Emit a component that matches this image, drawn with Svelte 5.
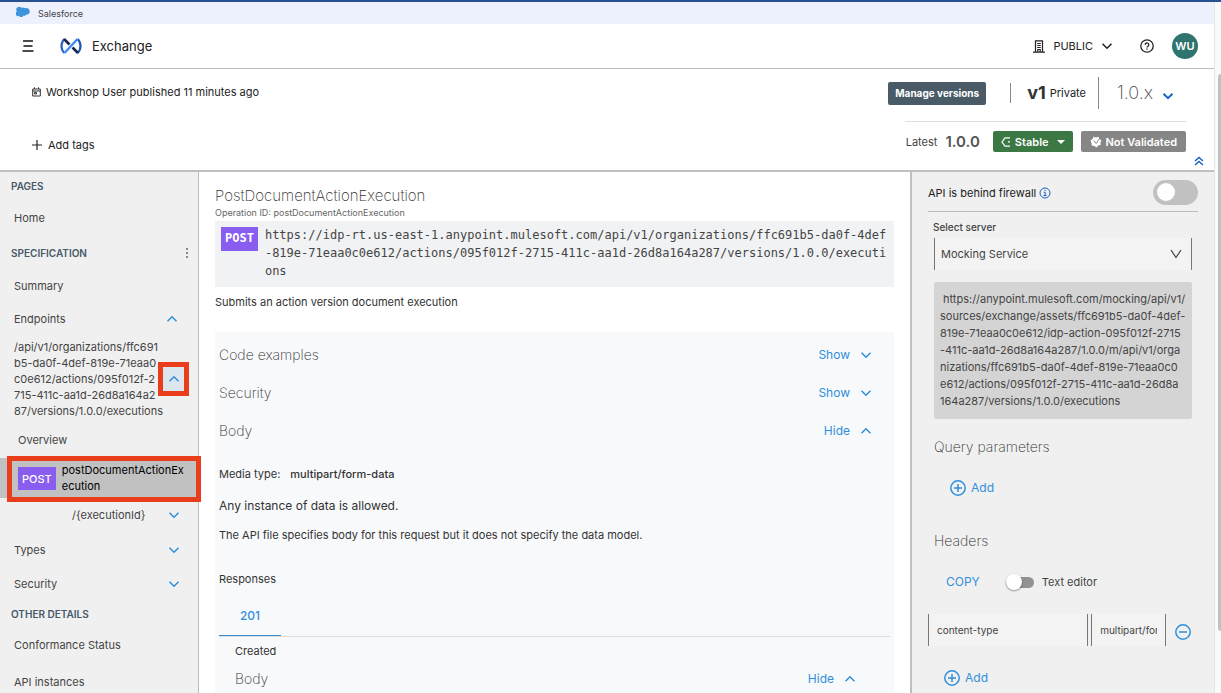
<script lang="ts">
	let firewall = false;
	let textEditor = false;
	let server = 'Mocking Service';
	let headerName = 'content-type';
	let headerValue = 'multipart/form-data';

	const path = [
		'/api/v1/organizations/ffc691',
		'b5-da0f-4def-819e-71eaa0',
		'c0e612/actions/095f012f-2',
		'715-411c-aa1d-26d8a164a2',
		'87/versions/1.0.0/executions'
	];
	const url =
		'https://idp-rt.us-east-1.anypoint.mulesoft.com/api/v1/organizations/ffc691b5-da0f-4def-819e-71eaa0c0e612/actions/095f012f-2715-411c-aa1d-26d8a164a287/versions/1.0.0/executions';
	const mockUrl = [
		'https://anypoint.mulesoft.com/mocking/api/v1/',
		'sources/exchange/assets/ffc691b5-da0f-4def-',
		'819e-71eaa0c0e612/idp-action-095f012f-2715',
		'-411c-aa1d-26d8a164a287/1.0.0/m/api/v1/orga',
		'nizations/ffc691b5-da0f-4def-819e-71eaa0c0',
		'e612/actions/095f012f-2715-411c-aa1d-26d8a',
		'164a287/versions/1.0.0/executions'
	];

	const sections = [
		{ name: 'Code examples', open: false },
		{ name: 'Security', open: false },
		{ name: 'Body', open: true }
	];
</script>

{#snippet chevron(up: boolean)}
	<svg class="chevron" class:up viewBox="0 0 12 12" width="12" height="12">
		<path d="M1.5 3.8 6 8.2l4.5-4.4" />
	</svg>
{/snippet}

{#snippet circle(plus: boolean)}
	<svg class="circle" viewBox="0 0 16 16" width="16" height="16">
		<circle cx="8" cy="8" r="7.2" />
		<path d={plus ? 'M4 8h8M8 4v8' : 'M4 8h8'} />
	</svg>
{/snippet}

<div class="app">
	<div class="page">
		<div class="brand-bar">
			<svg viewBox="0 0 14 10" width="14" height="10">
				<path
					d="M5.8 1.1A2.5 2.5 0 0 1 9.2 1.3 3 3 0 0 1 13.600 4 2.9 2.9 0 0 1 10.3 7.5 2.2 2.2 0 0 1 7.5 8.6 2.5 2.5 0 0 1 3 8.800 2.3 2.3 0 0 1 .9 4.500 2.7 2.7 0 0 1 5.8 1.100Z"
					fill="#3d94dc"
				/>
			</svg>
			<span>Salesforce</span>
		</div>

		<header class="topbar">
			<button class="menu" aria-label="Menu">
				<svg viewBox="0 0 12 12" width="12" height="12">
					<path d="M1 1h10M1.5 6h9M.5 11h11" stroke="#111" stroke-width="1.3" fill="none" />
				</svg>
			</button>
			<svg class="logo" viewBox="0 0 22 18" width="22" height="18" fill="none" stroke-width="2.2">
				<path d="M4.5 2Q1.500 4.500 1.500 9t3 7" stroke="#2b63c9" />
				<path d="M17.500 2q3 2.500 3 7t-3 7" stroke="#2256b4" />
				<path d="m4 2 5.500 5.500M12.500 10.500 18 16" stroke="#14284f" stroke-width="2.6" />
				<path d="M4.500 16 17.500 2" stroke="#3f8bf5" stroke-width="2.4" />
			</svg>
			<span class="product">Exchange</span>
			<button class="org">
				<svg viewBox="0 0 12 13" width="12" height="13" fill="none" stroke="#222" stroke-width="1.2">
					<path d="M2.500 12V.8h7V12M0 12.200h12M4.800 12V9.500h2.400V12M4.200 3.500h3.600M4.200 5.500h3.600M4.200 7.500h3.600" />
				</svg>
				<span>PUBLIC</span>
				{@render chevron(false)}
			</button>
			<button class="help" aria-label="Help">
				<svg viewBox="0 0 14 14" width="14" height="14" fill="none" stroke="#222" stroke-width="1.3">
					<circle cx="7" cy="7" r="6.2" />
					<path d="M5.2 5.7a1.8 1.8 0 1 1 2.7 1.6Q7 7.7 7 8.500M7 9.500v1.200" />
				</svg>
			</button>
			<button class="avatar">WU</button>
		</header>

		<section class="asset">
			<div class="asset-left">
				<div class="published">
					<svg viewBox="0 0 9 10" width="9" height="10" fill="none" stroke="#333">
						<path d="M.7 2h7.600v7H.7zM.7 4h7.600M2.500.3V2M6.500.3V2M2.500 5.500h2v1.500h-2z" />
					</svg>
					<span>Workshop User published 11 minutes ago</span>
				</div>
				<button class="add-tags">
					<svg viewBox="0 0 10 10" width="10" height="10" stroke="#222" stroke-width="1.2">
						<path d="M5 0v10M0 5h10" />
					</svg>
					Add tags
				</button>
			</div>
			<div class="asset-right">
				<div class="versions">
					<button class="manage">Manage versions</button>
					<span class="bar"></span>
					<strong class="major">v1</strong>
					<span>Private</span>
					<span class="bar tall"></span>
					<button class="minor">1.0.x {@render chevron(false)}</button>
				</div>
				<div class="latest">
					<span>Latest</span>
					<strong>1.0.0</strong>
					<button class="tag stable">
						<svg viewBox="0 0 10 10" width="10" height="10" fill="none" stroke="#fff" stroke-width="1.2">
							<path d="M9 .9H4L1 5l3 4.100h5M7 4.900h2" />
						</svg>
						Stable
						<svg viewBox="0 0 8 4" width="8" height="4"><path d="M0 0h8L4 4z" fill="#fff" /></svg>
					</button>
					<button class="tag invalid">
						<svg viewBox="0 0 12 12" width="12" height="12">
							<path d="m3.500.8 2.500.7 2.500-.7.8 2.200 2 1.200-.8 2.300.3 2.300-2.400.8L6.500 11.500 4.300 9.900 1.600 9.400 1.500 6.900.4 4.500l2.200-1.400z" fill="#fff" />
							<path d="m3.700 4.500 2.500 3 3-4.500" fill="none" stroke="#868686" />
						</svg>
						Not Validated
					</button>
				</div>
			</div>
			<button class="collapse" aria-label="Collapse header">
				<svg viewBox="0 0 10 10" width="10" height="10" fill="none" stroke="#1b63c6" stroke-width="1.5">
					<path d="m1 5 4-3.500L9 5M1 9l4-3.500L9 9" />
				</svg>
			</button>
		</section>

		<div class="workspace">
			<nav class="sidebar">
				<h2>Pages</h2>
				<a class="mid" href="#home">Home</a>
				<h2 class="spec">
					Specification
					<button class="more" aria-label="More">
						<svg viewBox="0 0 2 10" width="2" height="10" fill="#666">
							<circle cx="1" cy="1" r="1" />
							<circle cx="1" cy="5" r="1" />
							<circle cx="1" cy="9" r="1" />
						</svg>
					</button>
				</h2>
				<a class="short" href="#summary">Summary</a>
				<a href="#endpoints">Endpoints {@render chevron(true)}</a>
				<div class="path">
					<a href="#path">
						{#each path as line}
							<span>{line}</span>
						{/each}
					</a>
					<button class="toggle-path" aria-label="Collapse endpoint">{@render chevron(true)}</button>
				</div>
				<a class="mid overview" href="#overview">Overview</a>
				<a class="selected" href="#post">
					<span class="verb">POST</span>
					<span class="op">postDocumentActionExecution</span>
				</a>
				<a class="nested" href="#execution">/&#123;executionId&#125; {@render chevron(false)}</a>
				<a class="mid low" href="#types">Types {@render chevron(false)}</a>
				<a class="short low" href="#security">Security {@render chevron(false)}</a>
				<h2>Other details</h2>
				<a href="#conformance">Conformance Status</a>
				<a class="tall" href="#instances">API instances</a>
			</nav>

			<main>
				<h1>PostDocumentActionExecution</h1>
				<div class="operation">Operation ID: postDocumentActionExecution</div>
				<div class="url">
					<span class="method">POST</span>
					<code>{url}</code>
				</div>
				<p class="summary">Submits an action version document execution</p>

				<div class="docs">
					{#each sections as section}
						<div class="section">
							<h3>{section.name}</h3>
							<button class="link">
								{section.open ? 'Hide' : 'Show'}
								{@render chevron(section.open)}
							</button>
						</div>
					{/each}
					<div class="media">
						<span>Media type:</span>
						<b>multipart/form-data</b>
					</div>
					<p class="any">Any instance of data is allowed.</p>
					<p class="note">The API file specifies body for this request but it does not specify the data model.</p>
					<h4>Responses</h4>
					<div class="tabs"><button>201</button></div>
					<div class="response">
						<p>Created</p>
						<div class="response-body">
							<h3>Body</h3>
							<button class="link">Hide {@render chevron(true)}</button>
						</div>
					</div>
				</div>
			</main>

			<aside>
				<div class="firewall">
					<label for="firewall">API is behind firewall</label>
					<svg viewBox="0 0 12 12" width="12" height="12" fill="none" stroke="#1b63c6">
						<circle cx="6" cy="6" r="5" />
						<path d="M4.800 5.300h1.400v3M4.500 8.500h3M5.500 3.300h1.200" />
					</svg>
					<input id="firewall" class="switch" type="checkbox" bind:checked={firewall} />
				</div>
				<label class="server-label" for="server">Select server</label>
				<div class="server">
					<select id="server" bind:value={server}>
						<option>Mocking Service</option>
					</select>
					<svg viewBox="0 0 12 10" width="12" height="10" fill="none" stroke="#444" stroke-width="1.2">
						<path d="m1 1 5 7.500L11 1" />
					</svg>
				</div>
				<div class="mock">
					{#each mockUrl as line}
						<div>{line}</div>
					{/each}
				</div>
				<h3 class="params">Query parameters</h3>
				<button class="add query">{@render circle(true)} Add</button>
				<h3 class="headers">Headers</h3>
				<div class="tools">
					<button class="copy">COPY</button>
					<input id="editor" class="slim" type="checkbox" bind:checked={textEditor} />
					<label for="editor">Text editor</label>
				</div>
				<div class="pair">
					<input class="name" aria-label="Header name" bind:value={headerName} />
					<input class="value" aria-label="Header value" bind:value={headerValue} />
					<button aria-label="Remove header">{@render circle(false)}</button>
				</div>
				<button class="add header">{@render circle(true)} Add</button>
			</aside>
		</div>
	</div>
	<div class="scrollbar"><div class="thumb"></div></div>
</div>

<style>
	:global(body) {
		margin: 0;
	}
	.app,
	.app * {
		box-sizing: border-box;
	}
	.app {
		display: flex;
		height: 100vh;
		overflow: hidden;
		border-top: 2px solid #29508f;
		background: #fff;
		color: #222;
		font: 11px/16px Inter, 'Liberation Sans', sans-serif;
	}
	.page {
		flex: 1;
		min-width: 0;
		display: flex;
		flex-direction: column;
	}
	h1,
	h2,
	h3,
	h4,
	p {
		margin: 0;
		font-weight: 400;
	}
	a {
		color: inherit;
		text-decoration: none;
	}
	button {
		display: flex;
		align-items: center;
		padding: 0;
		border: 0;
		background: none;
		color: inherit;
		font: inherit;
		cursor: pointer;
	}
	svg {
		flex: none;
	}
	.chevron,
	.circle {
		fill: none;
		stroke: #2f8fdb;
		stroke-width: 1.5;
	}
	.chevron.up {
		transform: rotate(180deg);
	}

	.brand-bar {
		height: 22px;
		display: flex;
		align-items: center;
		gap: 8px;
		padding: 0 16px;
		background: #edf0fd;
		font-size: 9px;
		color: #444;
	}
	.brand-bar svg {
		margin-bottom: 2px;
	}
	.brand-bar span {
		padding-top: 2px;
	}
	.topbar {
		height: 45px;
		display: flex;
		align-items: center;
		padding: 0 16px 0 22px;
		border-bottom: 1px solid #bbb;
	}
	.logo {
		margin: 0 10px 0 26px;
	}
	.product {
		font-size: 13px;
	}
	.org {
		margin-left: auto;
		gap: 8px;
	}
	.org .chevron {
		stroke: #222;
	}
	.help {
		margin: 0 18px 0 27px;
	}
	.avatar {
		width: 26px;
		height: 26px;
		justify-content: center;
		border-radius: 50%;
		background: #2f746f;
		color: #fff;
		font-weight: 600;
	}

	.asset {
		position: relative;
		height: 103px;
		display: flex;
		justify-content: space-between;
		padding: 8px 28px 0 32px;
		border-bottom: 2px solid #bfbfbf;
	}
	.published {
		display: flex;
		align-items: center;
		gap: 5px;
		padding-top: 7px;
	}
	.add-tags {
		gap: 6px;
		margin-top: 37px;
	}
	.versions {
		height: 32px;
		display: flex;
		align-items: center;
		color: #222;
	}
	.manage {
		height: 23px;
		padding: 0 7px;
		border-radius: 2px;
		background: #4a5b68;
		color: #fff;
		font-size: 10px;
		font-weight: 700;
	}
	.bar {
		width: 1px;
		height: 20px;
		margin: 0 16px 0 24px;
		background: #888;
	}
	.bar.tall {
		height: 32px;
		margin: 0 18px 0 12px;
	}
	.major {
		margin-right: 4px;
		font-size: 18px;
		color: #333;
	}
	.minor {
		gap: 9px;
		padding-right: 12px;
		font-size: 18px;
		font-weight: 200;
		color: #444;
	}
	.minor .chevron {
		margin-top: 5px;
		stroke: #1b63c6;
		stroke-width: 2;
	}
	.latest {
		display: flex;
		align-items: center;
		justify-content: flex-end;
		margin: 12px 0 0 17px;
		padding-top: 9px;
		border-top: 1px solid #ddd;
		color: #444;
	}
	.latest strong {
		margin: 0 13px 0 8px;
		font-size: 15px;
		font-weight: 600;
		color: #555;
	}
	.tag {
		height: 21px;
		gap: 4px;
		padding: 0 8px;
		border-radius: 2px;
		color: #fff;
		font-weight: 600;
	}
	.stable {
		margin-right: 8px;
		background: #3c7844;
	}
	.stable svg:last-child {
		margin-left: 4px;
	}
	.invalid {
		padding: 0 9px;
		background: #868686;
	}
	.collapse {
		position: absolute;
		right: 10px;
		bottom: 4px;
	}

	.workspace {
		flex: 1;
		min-height: 0;
		display: flex;
		overflow: hidden;
	}
	.sidebar {
		flex: none;
		width: 199px;
		border-right: 1px solid #bbb;
		background: #f0f0f0;
		color: #444;
	}
	.sidebar h2 {
		display: flex;
		align-items: center;
		height: 28px;
		padding-left: 11px;
		font-size: 10px;
		font-weight: 600;
		text-transform: uppercase;
		color: #45596a;
	}
	.sidebar .spec {
		justify-content: space-between;
		height: 34px;
		padding-right: 10px;
	}
	.sidebar > a {
		display: flex;
		align-items: center;
		justify-content: space-between;
		height: 34px;
		padding: 0 20px 0 14px;
	}
	.sidebar > .short {
		height: 32px;
	}
	.sidebar > .mid {
		height: 36px;
	}
	.sidebar > .tall {
		height: 40px;
	}
	.sidebar > .low {
		padding-right: 18px;
	}
	.sidebar > .overview {
		padding-left: 18px;
	}
	.sidebar > .nested {
		padding: 0 18px 0 72px;
	}
	.path {
		position: relative;
		padding: 3px 0 3px 14px;
	}
	.path span {
		display: block;
	}
	.toggle-path {
		position: absolute;
		top: 26px;
		left: 158px;
		width: 31px;
		height: 34px;
		justify-content: center;
		border: 5px solid #e93d1c;
		background: #dde6ee;
	}
	.sidebar > .selected {
		position: relative;
		height: 40px;
		justify-content: flex-start;
		gap: 6px;
		padding: 0 14px 0 18px;
		background: #c1c1c1;
		color: #000;
	}
	.selected::after {
		content: '';
		position: absolute;
		inset: -2px -3px -4px 7px;
		border: 5px solid #e93d1c;
	}
	.verb {
		padding: 4px 4px 3px;
		background: #885df0;
		color: #fff;
		font-weight: 500;
	}
	.op {
		word-break: break-all;
	}

	main {
		flex: 1;
		min-width: 0;
		padding: 16px 16px 0;
		color: #333;
	}
	h1 {
		font-size: 15px;
		font-weight: 200;
		color: #333;
	}
	.operation {
		line-height: 17px;
		font-size: 9px;
		color: #666;
	}
	.url {
		display: flex;
		align-items: flex-start;
		gap: 7px;
		padding: 5px 6px 7px;
		background: #f1f2f4;
		color: #444;
	}
	.url code,
	.method {
		font: 12px/18px 'DejaVu Sans Mono', monospace;
	}
	.url code {
		word-break: break-all;
	}
	.url .method {
		margin-top: 1px;
		padding: 2px 4px 4px;
		background: #885df0;
		color: #fff;
		font-weight: 700;
	}
	.summary {
		padding: 7px 0 22px;
	}
	.docs {
		height: 100%;
		padding: 4px 4px 0;
		background: #f8f9fb;
	}
	.section {
		display: flex;
		align-items: center;
		justify-content: space-between;
		height: 38px;
		padding-right: 18px;
	}
	h3 {
		font-size: 14px;
		font-weight: 200;
		color: #333;
	}
	.link {
		gap: 10px;
		font-size: 12px;
		color: #2f8fdb;
	}
	.media {
		display: flex;
		gap: 10px;
		padding: 16px 0;
	}
	.media b {
		font-weight: 500;
	}
	.any {
		font-size: 12px;
	}
	.note {
		padding: 13px 0 28px;
	}
	.tabs {
		display: flex;
		margin-top: 10px;
		border-bottom: 1px solid #ddd;
	}
	.tabs button {
		width: 62px;
		height: 39px;
		justify-content: center;
		border-bottom: 1px solid #2f8fdb;
		font-size: 12px;
		font-weight: 500;
		color: #2f8fdb;
	}
	.response {
		padding: 6px 34px 0 16px;
	}
	.response-body {
		display: flex;
		justify-content: space-between;
		padding-top: 12px;
	}

	aside {
		flex: none;
		width: 304px;
		padding: 0 16px;
		border-left: 2px solid #bfbfbf;
		background: #f0f0f0;
		color: #444;
	}
	.firewall {
		display: flex;
		align-items: center;
		gap: 3px;
		height: 40px;
		padding-top: 2px;
		border-bottom: 1px solid #bbb;
		color: #222;
	}
	.switch {
		appearance: none;
		width: 45px;
		height: 25px;
		margin: 0 0 0 auto;
		padding: 3px 4px;
		border-radius: 13px;
		background: #c1c1c1;
	}
	.switch::before {
		content: '';
		display: block;
		width: 18px;
		height: 18px;
		border-radius: 50%;
		background: #fff;
	}
	.switch:checked::before {
		margin-left: auto;
	}
	.server-label {
		display: block;
		padding: 7px 5px 3px;
		font-size: 10px;
		font-weight: 500;
	}
	.server {
		position: relative;
		margin: 0 6px 12px;
	}
	.server select {
		appearance: none;
		display: block;
		width: 100%;
		height: 32px;
		padding: 0 6px;
		border: solid #777;
		border-width: 0 1px;
		border-radius: 0;
		background: #f3f3f3;
		color: #444;
		font: inherit;
	}
	.server svg {
		position: absolute;
		top: 11px;
		right: 10px;
		pointer-events: none;
	}
	.mock {
		margin: 0 6px;
		padding: 9px 6px;
		border-radius: 2px;
		background: #d4d4d4;
		line-height: 17px;
		white-space: nowrap;
	}
	.mock div:first-child {
		padding-left: 3px;
	}
	.params,
	.headers {
		padding: 20px 6px 0;
	}
	.add {
		gap: 5px;
		font-size: 12px;
		color: #2f8fdb;
	}
	.query {
		margin: 25px 22px 24px;
	}
	.headers {
		padding-top: 13px;
	}
	.tools {
		display: flex;
		align-items: center;
		margin: 25px 18px 24px;
	}
	.copy {
		margin-right: 26px;
		font-size: 12px;
		color: #2f8fdb;
	}
	.slim {
		appearance: none;
		display: flex;
		align-items: center;
		width: 28px;
		height: 11px;
		margin: 0 8px 0 0;
		border-radius: 6px;
		background: #929292;
	}
	.slim::before {
		content: '';
		width: 16px;
		height: 16px;
		border-radius: 50%;
		background: #fff;
		box-shadow: 0 1px 2px #0006;
	}
	.slim:checked::before {
		margin-left: auto;
	}
	.pair {
		display: flex;
		align-items: center;
		gap: 3px;
	}
	.pair input {
		min-width: 0;
		height: 32px;
		padding: 0 8px;
		border: solid #777;
		border-width: 0 1px;
		border-radius: 0;
		background: #f3f3f3;
		color: #444;
		font: 10px Inter, 'Liberation Sans', sans-serif;
	}
	.pair .name {
		flex: 5;
	}
	.pair .value {
		flex: 2;
	}
	.pair button {
		margin: 3px 7px 0 6px;
	}
	.header {
		margin: 24px 16px;
	}

	.scrollbar {
		flex: none;
		width: 7px;
		padding: 72px 0 0 3px;
		border-left: 1px solid #e4e4e4;
		background: #fafafa;
	}
	.thumb {
		height: 90%;
		border-radius: 4px 0 0 4px;
		background: #c1c1c1;
	}
</style>
